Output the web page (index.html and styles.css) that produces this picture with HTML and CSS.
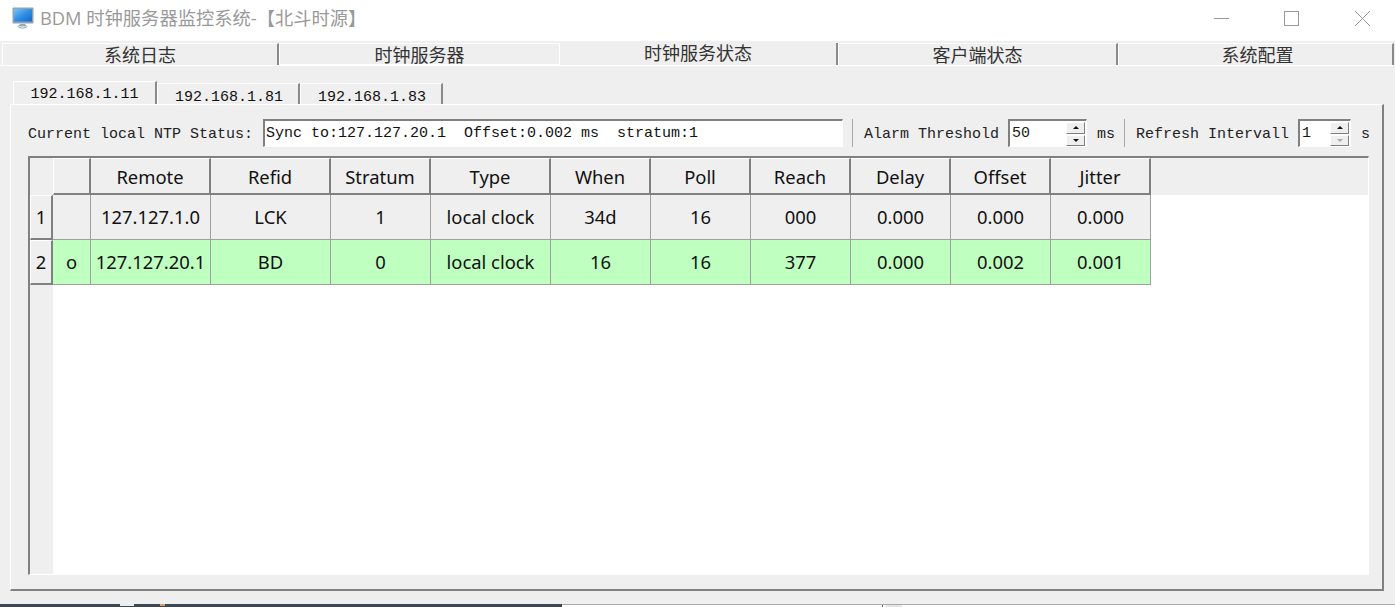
FILE: index.html
```html
<!DOCTYPE html>
<html lang="zh">
<head>
<meta charset="utf-8">
<title>BDM 时钟服务器监控系统</title>
<link rel="stylesheet" href="styles.css">
</head>
<body>
<div class="window">
  <header class="titlebar">
    <svg class="app-icon" width="22" height="22" viewBox="0 0 22 22">
      <defs><linearGradient id="scr" x1="0" y1="0" x2="1" y2="1"><stop offset="0" stop-color="#7cc4f4"/><stop offset="0.5" stop-color="#2f8fe6"/><stop offset="1" stop-color="#1467c8"/></linearGradient></defs>
      <rect x="0.5" y="0.5" width="21" height="16" rx="1" fill="#8ea3b5"/>
      <rect x="2" y="2" width="18" height="12.5" fill="url(#scr)"/>
      <path d="M8 17h5l1 2.5H7z" fill="#9fb2c0"/>
      <ellipse cx="10.5" cy="19.5" rx="4.5" ry="1.6" fill="none" stroke="#8aa0ae" stroke-width="1"/>
    </svg>
    <span class="title-text">BDM 时钟服务器监控系统-【北斗时源】</span>
    <div class="win-controls">
      <svg width="46" height="41" viewBox="0 0 46 41"><path d="M3 18.5h15" stroke="#999" fill="none"/></svg>
      <svg width="46" height="41" viewBox="0 0 46 41"><rect x="27.5" y="11.5" width="14" height="14" stroke="#999" fill="none"/></svg>
      <svg width="92" height="41" viewBox="0 0 92 41"><path d="M52 11l15 15M67 11L52 26" stroke="#999" fill="none"/></svg>
    </div>
  </header>

  <main class="client">
    <nav class="main-tabs">
      <div class="main-tab">系统日志</div>
      <div class="main-tab">时钟服务器</div>
      <div class="main-tab active">时钟服务状态</div>
      <div class="main-tab">客户端状态</div>
      <div class="main-tab">系统配置</div>
    </nav>
    <section class="main-pane">
      <nav class="sub-tabs">
        <div class="sub-tab active">192.168.1.11</div>
        <div class="sub-tab">192.168.1.81</div>
        <div class="sub-tab">192.168.1.83</div>
      </nav>
      <section class="sub-pane">
        <div class="toolbar">
          <span class="label first">Current local NTP Status:</span>
          <div class="field status">Sync to:127.127.20.1  Offset:0.002 ms  stratum:1</div>
          <i class="sep"></i>
          <span class="label">Alarm Threshold</span>
          <div class="field spin spin-a"><span class="spin-val">50</span>
            <span class="spin-btns"><b class="up"></b><b class="down"></b></span></div>
          <span class="label unit">ms</span>
          <i class="sep"></i>
          <span class="label">Refresh Intervall</span>
          <div class="field spin spin-b"><span class="spin-val">1</span>
            <span class="spin-btns"><b class="up"></b><b class="down off"></b></span></div>
          <span class="label unit">s</span>
        </div>

        <div class="grid-frame">
          <div class="grid-head">
            <div class="corner"></div>
            <div class="cols">
              <div class="hcell"></div><div class="hcell">Remote</div><div class="hcell">Refid</div><div class="hcell">Stratum</div><div class="hcell">Type</div><div class="hcell">When</div><div class="hcell">Poll</div><div class="hcell">Reach</div><div class="hcell">Delay</div><div class="hcell">Offset</div><div class="hcell">Jitter</div>
            </div>
          </div>
          <div class="grid-body">
            <div class="row-heads">
              <div class="rhead">1</div>
              <div class="rhead">2</div>
            </div>
            <div class="rows">
              <div class="cols row">
                <div class="cell"></div><div class="cell">127.127.1.0</div><div class="cell">LCK</div><div class="cell">1</div><div class="cell">local clock</div><div class="cell">34d</div><div class="cell">16</div><div class="cell">000</div><div class="cell">0.000</div><div class="cell">0.000</div><div class="cell">0.000</div>
              </div>
              <div class="cols row sync">
                <div class="cell">o</div><div class="cell">127.127.20.1</div><div class="cell">BD</div><div class="cell">0</div><div class="cell">local clock</div><div class="cell">16</div><div class="cell">16</div><div class="cell">377</div><div class="cell">0.000</div><div class="cell">0.002</div><div class="cell">0.001</div>
              </div>
            </div>
          </div>
        </div>
      </section>
    </section>
  </main>

  <footer class="behind">
    <div class="behind-dark"><span class="bit bit-a"></span><span class="bit bit-b"></span></div>
    <div class="behind-light"><span class="mark mark-a"></span><span class="mark mark-b"></span></div>
  </footer>
</div>
</body>
</html>
```

FILE: styles.css
```css
* { box-sizing: border-box; }
html, body { margin: 0; height: 100%; overflow: hidden; }
body { background: #efefef; }
.window { width: 1395px; height: 607px; display: flex; flex-direction: column; }

/* title bar */
.titlebar { height: 41px; flex: none; background: #fff; display: flex; align-items: flex-start; padding: 7px 0 0 12px; }
.app-icon { width: 22px; height: 22px; flex: none; }
.title-text { margin-left: 6px; font: 18.3px/22px "Open Sans", "Noto Sans CJK SC", sans-serif; color: #999; white-space: pre; }
.win-controls { margin-left: auto; margin-top: -7px; display: flex; }
.win-controls svg { display: block; }

/* main tabs */
.client { flex: 1; min-height: 0; background: #efefef; padding: 2px 1px 0 2px; display: flex; flex-direction: column; }
.main-tabs { display: flex; height: 22px; flex: none; }
.main-tab { width: 280px; height: 22px; font: 18px/21px "Noto Sans CJK SC", sans-serif; color: #333; text-align: center; border-top: 1px solid #fff; border-left: 1px solid #fff; border-right: 2px solid #8a8a8a; background: #efefef; white-space: nowrap; }
.main-tab:first-child { width: 277px; }
.main-tab:nth-child(2) { border-right: 1px solid #fff; border-bottom: 1px solid #fff; width: 281px; }
.main-tab.active { width: 278px; border-top: 0; border-left: 0; line-height: 19px; }
.main-tab:last-child { width: 276px; padding-left: 4px; }
.main-pane { flex: 1; min-height: 0; border-top: 1px solid #fff; margin-left: -2px; margin-right: -1px; padding: 15px 10px 0 10px; display: flex; flex-direction: column; }

/* sub tabs */
.sub-tabs { display: flex; height: 23px; flex: none; padding-left: 3px; align-items: flex-end; }
.sub-tab { width: 143px; height: 21px; padding: 2px 0 0 2px; font: 15px/23px "Liberation Mono", monospace; color: #111; text-align: center; border-top: 1px solid #fff; border-left: 1px solid #fff; border-right: 2px solid #8a8a8a; white-space: pre; }
.sub-tab.active { width: 144px; height: 23px; line-height: 22px; padding: 2px 1px 0 1px; }

.sub-pane { height: 487px; width: 1374px; flex: none; border-top: 1px solid #fff; border-left: 1px solid #fff; border-right: 2px solid #808080; border-bottom: 2px solid #808080; padding: 14px 13px 0 17px; display: flex; flex-direction: column; }

/* toolbar */
.toolbar { height: 28px; flex: none; display: flex; align-items: center; font: 15px "Liberation Mono", monospace; color: #222; white-space: pre; }
.label { flex: none; padding-top: 2px; }
.label.first { width: 235px; }
.field { height: 28px; background: #fff; border-top: 2px solid #808080; border-left: 2px solid #808080; border-right: 1px solid #fff; border-bottom: 1px solid #fff; color: #111; line-height: 26px; }
.status { width: 580px; padding-left: 1px; flex: none; }
.sep { width: 1px; height: 28px; background: #a8a8a8; flex: none; margin: 0 11px 0 9px; }
.spin { flex: none; display: flex; justify-content: space-between; margin-left: 9px; padding: 1px 1px 1px 2px; }
.spin-a { width: 79px; }
.spin-b { width: 53px; }
.spin-val { line-height: 24px; color: #1a1a1a; }
.spin-btns { width: 19px; display: flex; flex-direction: column; gap: 1px; height: 24px; }
.spin-btns b { flex: 1; display: flex; align-items: center; justify-content: center; background: #efefef; border-top: 1px solid #fff; border-left: 1px solid #fff; border-right: 1px solid #808080; border-bottom: 1px solid #808080; }
.spin-btns b::after { content: ""; border-left: 3px solid transparent; border-right: 3px solid transparent; }
.spin-btns .up::after { border-bottom: 3px solid #111; }
.spin-btns .down::after { border-top: 3px solid #111; }
.spin-btns .off::after { border-top-color: #aaa; }
.unit { margin-left: 10px; }

/* table */
.grid-frame { width: 1341px; height: 419px; flex: none; margin: 9px 0 0 0; border-top: 2px solid #808080; border-left: 2px solid #808080; border-right: 1px solid #fff; border-bottom: 1px solid #fff; background: #fff; display: flex; flex-direction: column; font: 18.4px "Noto Sans", "Open Sans", sans-serif; color: #111; }
.grid-head { height: 37px; flex: none; background: #efefef; display: flex; }
.corner { width: 23px; flex: none; }
.cols { display: grid; width: max-content; grid-template-columns: 38px 120px 120px 100px 120px 100px 100px 100px 100px 100px 100px; }
.hcell { height: 37px; display: flex; align-items: center; justify-content: center; background: #efefef; border-top: 1px solid #fff; border-right: 2px solid #808080; border-bottom: 2px solid #808080; padding-top: 1px; }
.hcell:first-child { border-left: 1px solid #fff; }
.grid-body { flex: 1; min-height: 0; display: flex; }
.row-heads { width: 23px; flex: none; background: #efefef; }
.rhead { height: 45px; display: flex; align-items: center; justify-content: center; border-top: 1px solid #fff; border-left: 1px solid #fff; border-right: 2px solid #808080; border-bottom: 2px solid #808080; padding-bottom: 1px; }
.rows { flex: 1; min-width: 0; }
.row { background: #efefef; }
.row.sync { background: #bfffbf; }
.cell { height: 45px; padding-bottom: 2px; display: flex; align-items: center; justify-content: center; border-right: 1px solid #a0a0a0; border-bottom: 1px solid #a0a0a0; white-space: nowrap; }

/* window behind */
.behind { height: 3px; flex: none; display: flex; background: #fff; }
.behind-dark { width: 562px; background: #3e4650; display: flex; }
.behind-light { flex: 1; border-top: 1px solid #aaa; display: flex; }
.bit { height: 2px; display: block; }
.bit-a { width: 14px; margin-left: 120px; background: #e8eef2; }
.bit-b { width: 5px; margin-left: 26px; background: #d8a060; }
.mark { height: 2px; display: block; }
.mark-a { width: 1px; margin-left: 320px; background: #666; }
.mark-b { width: 16px; margin-left: 3px; background: #e4e4e4; }
```
